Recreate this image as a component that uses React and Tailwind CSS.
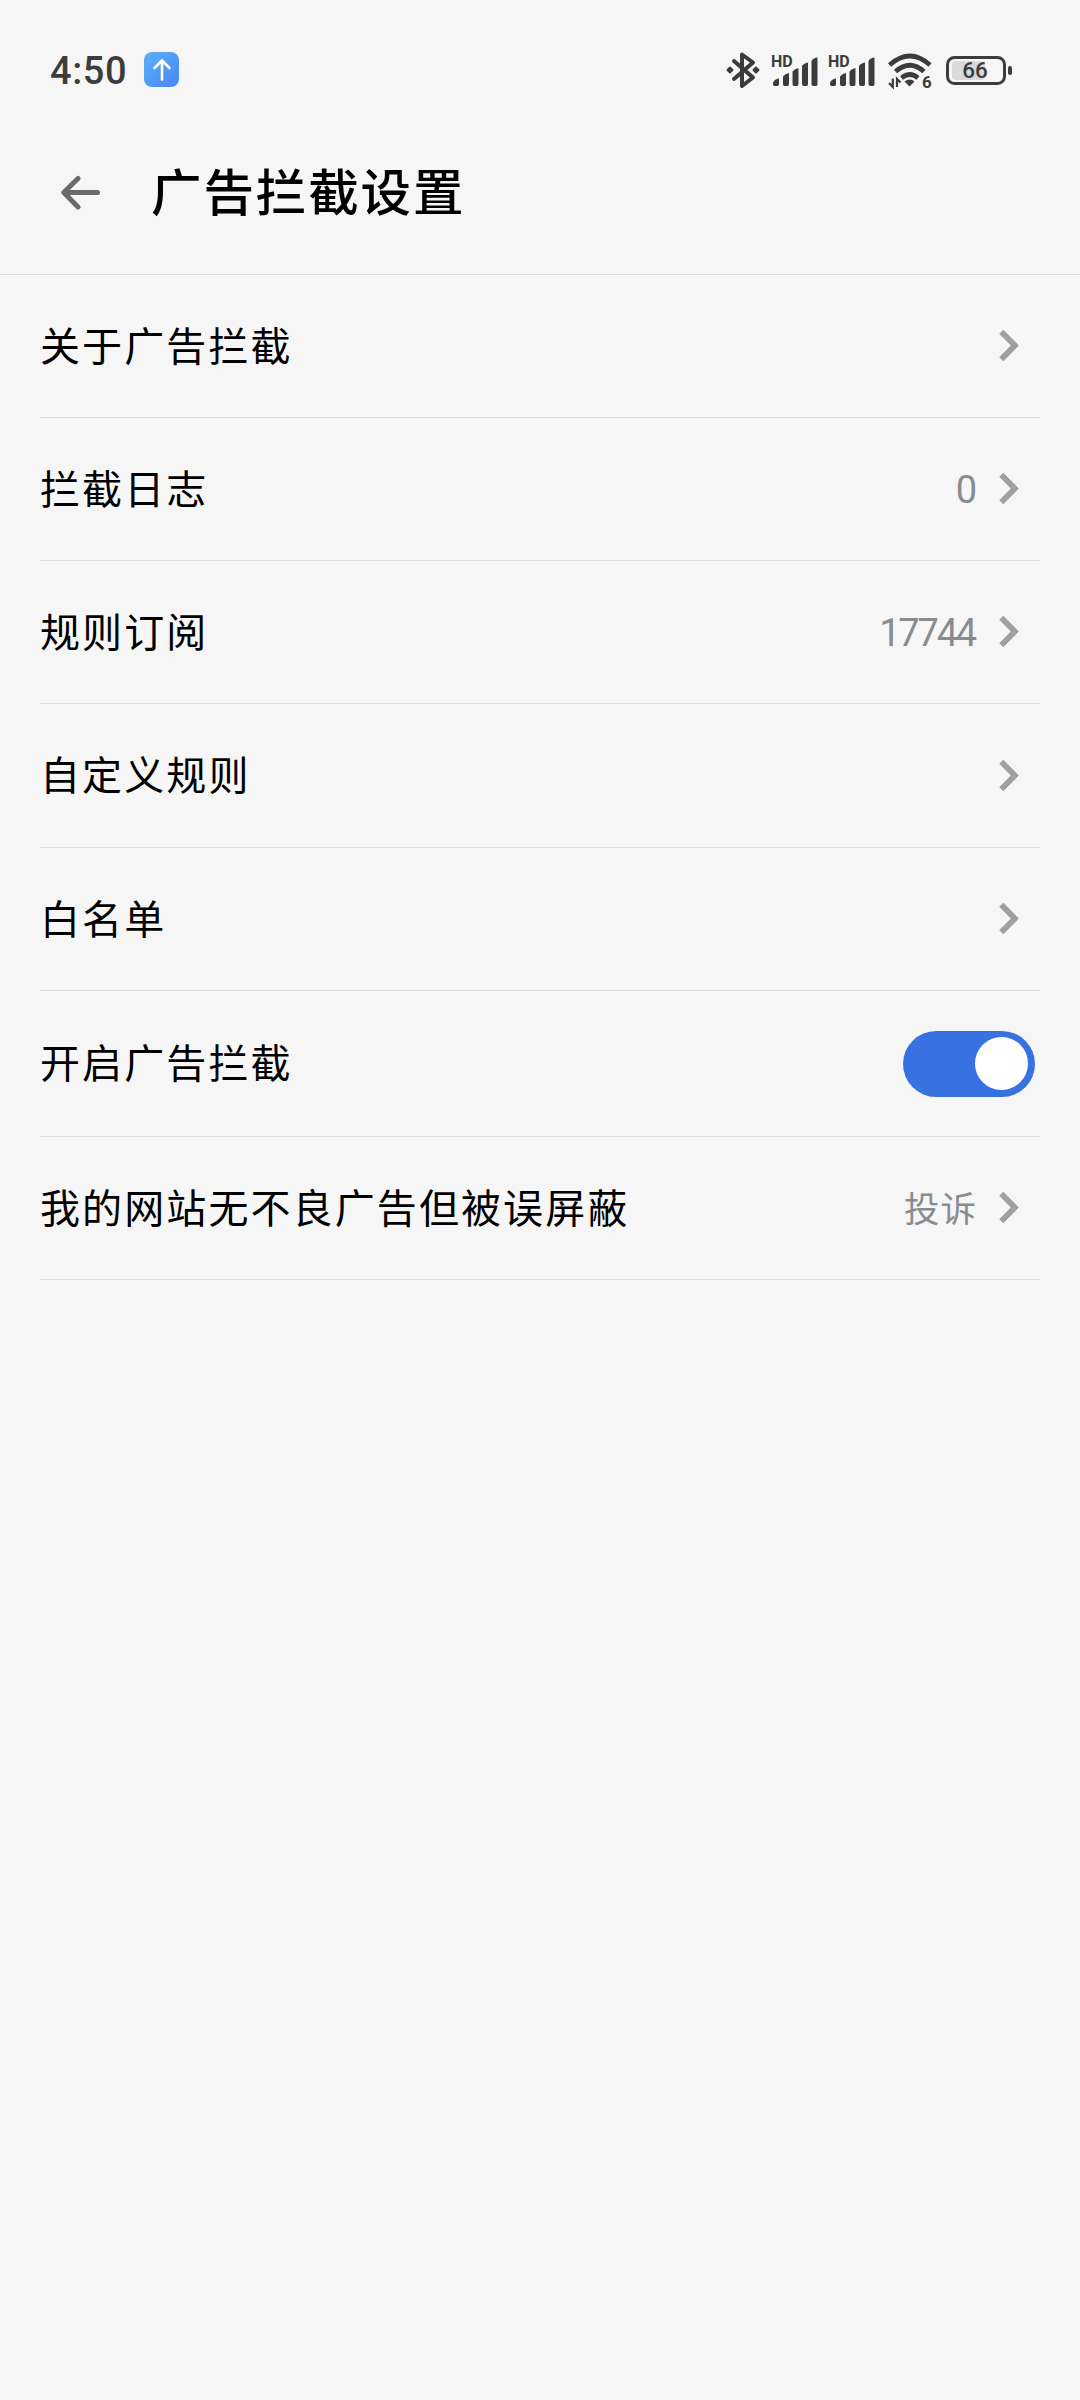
import { useState } from 'react';

const ROWS = [
    { id: 'about', label: '关于广告拦截', height: 'h-[143px]' },
    { id: 'log', label: '拦截日志', value: '0', height: 'h-[143px]' },
    { id: 'subscribe', label: '规则订阅', value: '17744', height: 'h-[143px]' },
    { id: 'custom', label: '自定义规则', height: 'h-[144px]' },
    { id: 'whitelist', label: '白名单', height: 'h-[143px]' },
    { id: 'enable', label: '开启广告拦截', toggle: true, height: 'h-[146px]' },
    { id: 'appeal', label: '我的网站无不良广告但被误屏蔽', text: '投诉', height: 'h-[143px]' },
];

function BluetoothIcon() {
    return (
        <svg width="34" height="38" viewBox="0 0 34 38" className="mt-[15px] shrink-0" fill="none" stroke="#3c3c3c" strokeWidth="4" strokeLinejoin="round" strokeLinecap="round">
            <path d="M8 10 L27 26.500 L16 35 V3.500 L27 11.500 L8 28" />
            <path d="M4 16.500 L6.500 19 L4 21.500 L1.500 19 Z M30 16.500 L32.500 19 L30 21.500 L27.500 19 Z" fill="#3c3c3c" strokeWidth="2" />
        </svg>
    );
}

function SignalIcon() {
    return (
        <svg width="48" height="40" viewBox="0 -6 48 40" fill="#3c3c3c" className="shrink-0">
            <text x="0" y="13" fontSize="16" fontWeight="700" fontFamily="Roboto, sans-serif">HD</text>
            <path d="M2 29 Q3 25 8 24.500 V30 Q8 32 6.500 32 H3.500 Q2 32 2 30Z" />
            <path d="M12 22.500 Q14 19.500 18 19 V30 Q18 32 16.500 32 H13.500 Q12 32 12 30Z" />
            <path d="M21.500 17.500 Q23.500 14.500 27.500 14 V30 Q27.500 32 26 32 H23 Q21.500 32 21.500 30Z" />
            <path d="M31 12 Q32.500 9.500 37 8.500 V30 Q37 32 35.500 32 H33 Q31 32 31 30Z" />
            <path d="M40.500 7 Q42.500 3.500 46.500 3.500 V30 Q46.500 32 45 32 H42.500 Q40.500 32 40.500 30Z" />
        </svg>
    );
}

function WifiIcon() {
    return (
        <svg width="46" height="40" viewBox="0 0 46 40" fill="none" stroke="#3c3c3c" strokeWidth="4.600" className="shrink-0">
            <path d="M1.500 12 Q22 -6 42 12" />
            <path d="M7.500 18.500 Q22 6 36 18.500" />
            <path d="M13.500 25 Q22 18 30 25" />
            <path d="M16.500 28.500 Q22 24.500 26.500 28.500 L21.500 33.500 Z" fill="#3c3c3c" stroke="none" />
            <path d="M4.800 25.500 V34 L1 30 M9 34 V26 L12.500 29.500" strokeWidth="2.200" />
            <text x="34" y="35" fontSize="17" fontWeight="700" fontFamily="Roboto, sans-serif" fill="#3c3c3c" stroke="none">6</text>
        </svg>
    );
}

function BatteryIcon() {
    return (
        <svg width="68" height="30" viewBox="0 0 68 30" className="shrink-0">
            <rect x="6" y="5" width="33" height="19" rx="4" fill="#dadada" />
            <rect x="1.500" y="1.500" width="57" height="26" rx="7" fill="none" stroke="#3c3c3c" strokeWidth="3" />
            <rect x="62" y="10" width="4" height="9" rx="2" fill="#3c3c3c" />
            <text x="29" y="22" textAnchor="middle" fontSize="22.500" fontWeight="500" fontFamily="Roboto, sans-serif" fill="#3c3c3c">66</text>
        </svg>
    );
}

function StatusBar() {
    return (
        <div className="flex h-[140px] items-start pt-[36px] pr-[66px] pl-[50px] text-[#3c3c3c]">
            <span className="mt-[8px] w-[94px] shrink-0 font-[Roboto,sans-serif] text-[38px] leading-[54px] font-medium tracking-[0.6px]">4:50</span>
            <span className="mt-[16px] flex size-[35px] shrink-0 items-center justify-center rounded-[8px] bg-linear-to-br from-[#5cb0f8] to-[#4a84f5]">
                <svg width="20" height="24" viewBox="0 0 20 24" fill="none" stroke="white" strokeWidth="2.600" strokeLinecap="round" strokeLinejoin="round">
                    <path d="M10 21.500 V3 M2.500 10 L10 2.500 L17.500 10" />
                </svg>
            </span>
            <div className="ml-auto flex items-start">
                <BluetoothIcon />
                <div className="mt-[12px] ml-[11px] flex gap-[9px]">
                    <SignalIcon />
                    <SignalIcon />
                </div>
                <div className="mt-[17px] ml-[12px]">
                    <WifiIcon />
                </div>
                <div className="mt-[20px] ml-[12px]">
                    <BatteryIcon />
                </div>
            </div>
        </div>
    );
}

function Header() {
    return (
        <header className="flex h-[135px] items-start border-b border-[#dcdcdc] pt-[10px] pl-[60px]">
            <svg width="42" height="36" viewBox="0 0 42 36" fill="none" stroke="#6a6a6a" strokeWidth="5" strokeLinecap="round" strokeLinejoin="round" className="mt-[25px] shrink-0">
                <path d="M37.500 17.500 H4 M18 3.500 L3.800 17.500 L18 32" />
            </svg>
            <h1 className="mt-[3px] ml-[49px] text-[50.500px] leading-[72px] font-medium tracking-[1.900px]">广告拦截设置</h1>
        </header>
    );
}

function Chevron() {
    return (
        <svg width="21" height="33" viewBox="0 0 21 33" fill="none" stroke="#a0a0a0" strokeWidth="5.800" className="mr-[20px] mb-[1px] ml-[23px]">
            <path d="M2.300 2.800 L15.800 16.500 L2.300 30.200" />
        </svg>
    );
}

function Toggle({ checked, onChange }) {
    return (
        <button
            type="button"
            role="switch"
            aria-checked={checked}
            onClick={() => onChange(!checked)}
            className={`mr-[5px] flex h-[66px] w-[132px] items-center rounded-full px-[7px] ${checked ? 'justify-end bg-[#3872e0]' : 'justify-start bg-gray-300'}`}
        >
            <span className="size-[53px] rounded-full bg-white" />
        </button>
    );
}

export default function App() {
    const [enabled, setEnabled] = useState(true);

    return (
        <div className="h-[2400px] w-[1080px] overflow-hidden bg-[#f6f6f6] font-['Noto_Sans_CJK_SC',sans-serif] text-black">
            <StatusBar />
            <Header />
            <main className="px-[40px]">
                {ROWS.map((row) => (
                    <div key={row.id} className={`flex items-center border-b border-[#dcdcdc] ${row.height}`}>
                        <span className="flex-1 pb-[5px] text-[40px] leading-[58px] tracking-[2.100px]">{row.label}</span>
                        {row.value && <span className="mr-[1px] pt-[2px] font-[Roboto,sans-serif] text-[38px] leading-[44px] tracking-[-2.200px] text-[#888c90]">{row.value}</span>}
                        {row.text && <span className="-mr-[1px] pb-[2px] text-[35.500px] leading-[50px] tracking-[1px] text-[#888c90]">{row.text}</span>}
                        {row.toggle ? <Toggle checked={enabled} onChange={setEnabled} /> : <Chevron />}
                    </div>
                ))}
            </main>
        </div>
    );
}
